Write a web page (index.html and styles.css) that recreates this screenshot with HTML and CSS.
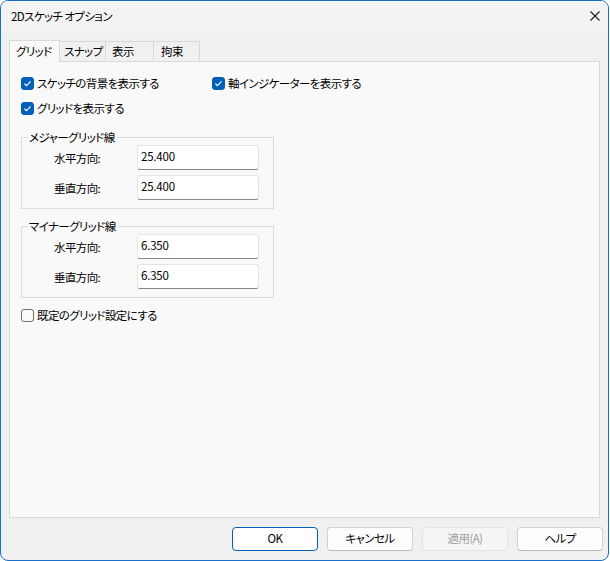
FILE: index.html
```html
<!DOCTYPE html>
<html lang="ja">
<head>
<meta charset="utf-8">
<title>2Dスケッチ オプション</title>
<link rel="stylesheet" href="styles.css">
</head>
<body>
<div class="window">
  <div class="titlebar">
    <span class="title">2Dスケッチ オプション</span>
    <svg class="close" width="10" height="10" viewBox="0 0 10 10"><path d="M0.5 0.5 L9.5 9.5 M9.5 0.5 L0.5 9.5" stroke="#1a1a1a" stroke-width="1.1" fill="none"/></svg>
  </div>
  <div class="content">
    <div class="tabs">
      <div class="tab tab-active tab-w1">グリッド</div>
      <div class="tab tab-w2">スナップ</div>
      <div class="tab tab-w3">表示</div>
      <div class="tab tab-w4">拘束</div>
    </div>
    <div class="panel">
      <div class="check-row">
        <div class="check check-col"><span class="box box-on"><svg width="13" height="13" viewBox="0 0 13 13"><path d="M3.4 6.7 L5.5 8.7 L9.6 4.4" stroke="#fff" stroke-width="1.2" fill="none"/></svg></span>スケッチの背景を表示する</div>
        <div class="check"><span class="box box-on"><svg width="13" height="13" viewBox="0 0 13 13"><path d="M3.4 6.7 L5.5 8.7 L9.6 4.4" stroke="#fff" stroke-width="1.2" fill="none"/></svg></span>軸インジケーターを表示する</div>
      </div>
      <div class="check-row">
        <div class="check"><span class="box box-on"><svg width="13" height="13" viewBox="0 0 13 13"><path d="M3.4 6.7 L5.5 8.7 L9.6 4.4" stroke="#fff" stroke-width="1.2" fill="none"/></svg></span>グリッドを表示する</div>
      </div>
      <fieldset class="group group-major">
        <legend>メジャーグリッド線</legend>
        <div class="fields">
          <div class="field"><span class="field-label">水平方向:</span><span class="input">25.400</span></div>
          <div class="field"><span class="field-label">垂直方向:</span><span class="input">25.400</span></div>
        </div>
      </fieldset>
      <fieldset class="group group-minor">
        <legend>マイナーグリッド線</legend>
        <div class="fields">
          <div class="field"><span class="field-label">水平方向:</span><span class="input">6.350</span></div>
          <div class="field"><span class="field-label">垂直方向:</span><span class="input">6.350</span></div>
        </div>
      </fieldset>
      <div class="check-row check-row-last">
        <div class="check"><span class="box"></span>既定のグリッド設定にする</div>
      </div>
    </div>
  </div>
  <div class="footer">
    <div class="btn btn-default">OK</div>
    <div class="btn">キャンセル</div>
    <div class="btn btn-disabled">適用(A)</div>
    <div class="btn">ヘルプ</div>
  </div>
</div>
</body>
</html>
```

FILE: styles.css
```css
html, body {
  margin: 0;
  padding: 0;
  background: #ffffff;
}

.window {
  width: 609px;
  height: 561px;
  box-sizing: border-box;
  border: 1px solid #1c6fc6;
  border-radius: 8px;
  background: #f0f0f0;
  display: flex;
  flex-direction: column;
  overflow: hidden;
  font-family: "Noto Sans CJK JP", sans-serif;
  font-size: 11.5px;
  font-weight: 400;
  font-feature-settings: "palt";
  letter-spacing: -0.6px;
  color: #000;
  white-space: nowrap;
}

.titlebar {
  height: 30px;
  flex: none;
  background: #f3f3f3;
  display: flex;
  align-items: center;
  padding: 0 8px 1px 10px;
  box-sizing: border-box;
}

.title {
  line-height: 16px;
}

.close {
  margin-left: auto;
}

.content {
  flex: 1;
  display: flex;
  flex-direction: column;
  padding: 9px 8px 0 8px;
  min-height: 0;
}

.tabs {
  height: 21px;
  display: flex;
  align-items: flex-end;
  flex: none;
}

.tab {
  height: 20px;
  box-sizing: border-box;
  border: 1px solid #d9d9d9;
  border-bottom: none;
  background: #f0f0f0;
  padding-left: 5px;
  line-height: 19px;
  margin-left: -1px;
}

.tab-active {
  height: 22px;
  margin-bottom: -1px;
  margin-left: 0;
  background: #f9f9f9;
  position: relative;
  z-index: 1;
  padding-left: 6px;
  line-height: 21px;
}

.tab-w1 { width: 51px; }
.tab-w2 { width: 47px; padding-left: 4px; }
.tab-w3 { width: 49px; padding-left: 6px; }
.tab-w4 { width: 47px; padding-left: 7px; }

.panel {
  flex: 1;
  border: 1px solid #d9d9d9;
  background: #f9f9f9;
  padding: 11px 0 0 11px;
}

.check-row {
  display: flex;
  height: 20px;
  align-items: center;
  margin-bottom: 5px;
}

.check-row-last {
  margin-top: 7px;
}

.check {
  display: flex;
  align-items: center;
  gap: 3px;
  line-height: 20px;
}

.check-col {
  width: 191px;
}

.box {
  width: 13px;
  height: 13px;
  box-sizing: border-box;
  border-radius: 3px;
  border: 1px solid #6e6e6e;
  background: #fbfbfb;
  display: block;
  flex: none;
}

.box svg {
  display: block;
  margin: -1px;
}

.box-on {
  background: #005fb8;
  border-color: #005fb8;
}

.group {
  width: 253px;
  box-sizing: border-box;
  border: 1px solid #dcdcdc;
  margin: 11px 0 0 0;
  padding: 0 0 8px 0;
  min-width: 0;
}

.group-minor {
  margin-top: 9px;
}

.group legend {
  padding: 0 2px 0 1px;
  margin-left: 6px;
  line-height: 16px;
}

.fields {
  padding-left: 32px;
}

.field {
  display: flex;
  align-items: center;
  height: 25px;
}

.field + .field {
  margin-top: 5px;
}

.field-label {
  width: 83px;
}

.input {
  width: 122px;
  height: 25px;
  box-sizing: border-box;
  border: 1px solid #e5e5e5;
  border-bottom-color: #878787;
  border-radius: 3px;
  background: #ffffff;
  padding-left: 3px;
  line-height: 21px;
  letter-spacing: -0.2px;
}

.footer {
  height: 42px;
  flex: none;
  box-sizing: border-box;
  display: flex;
  justify-content: flex-end;
  gap: 9px;
  padding: 9px 5px 9px 0;
}

.btn {
  width: 86px;
  height: 24px;
  box-sizing: border-box;
  border: 1px solid #d0d0d0;
  border-bottom-color: #bcbcbc;
  border-radius: 4px;
  background: #fdfdfd;
  text-align: center;
  line-height: 21px;
}

.btn-default {
  border-color: #005fb8;
  background: #ffffff;
}

.btn-disabled {
  background: #f5f5f5;
  border-color: #e5e5e5;
  color: #a0a0a0;
}
```
